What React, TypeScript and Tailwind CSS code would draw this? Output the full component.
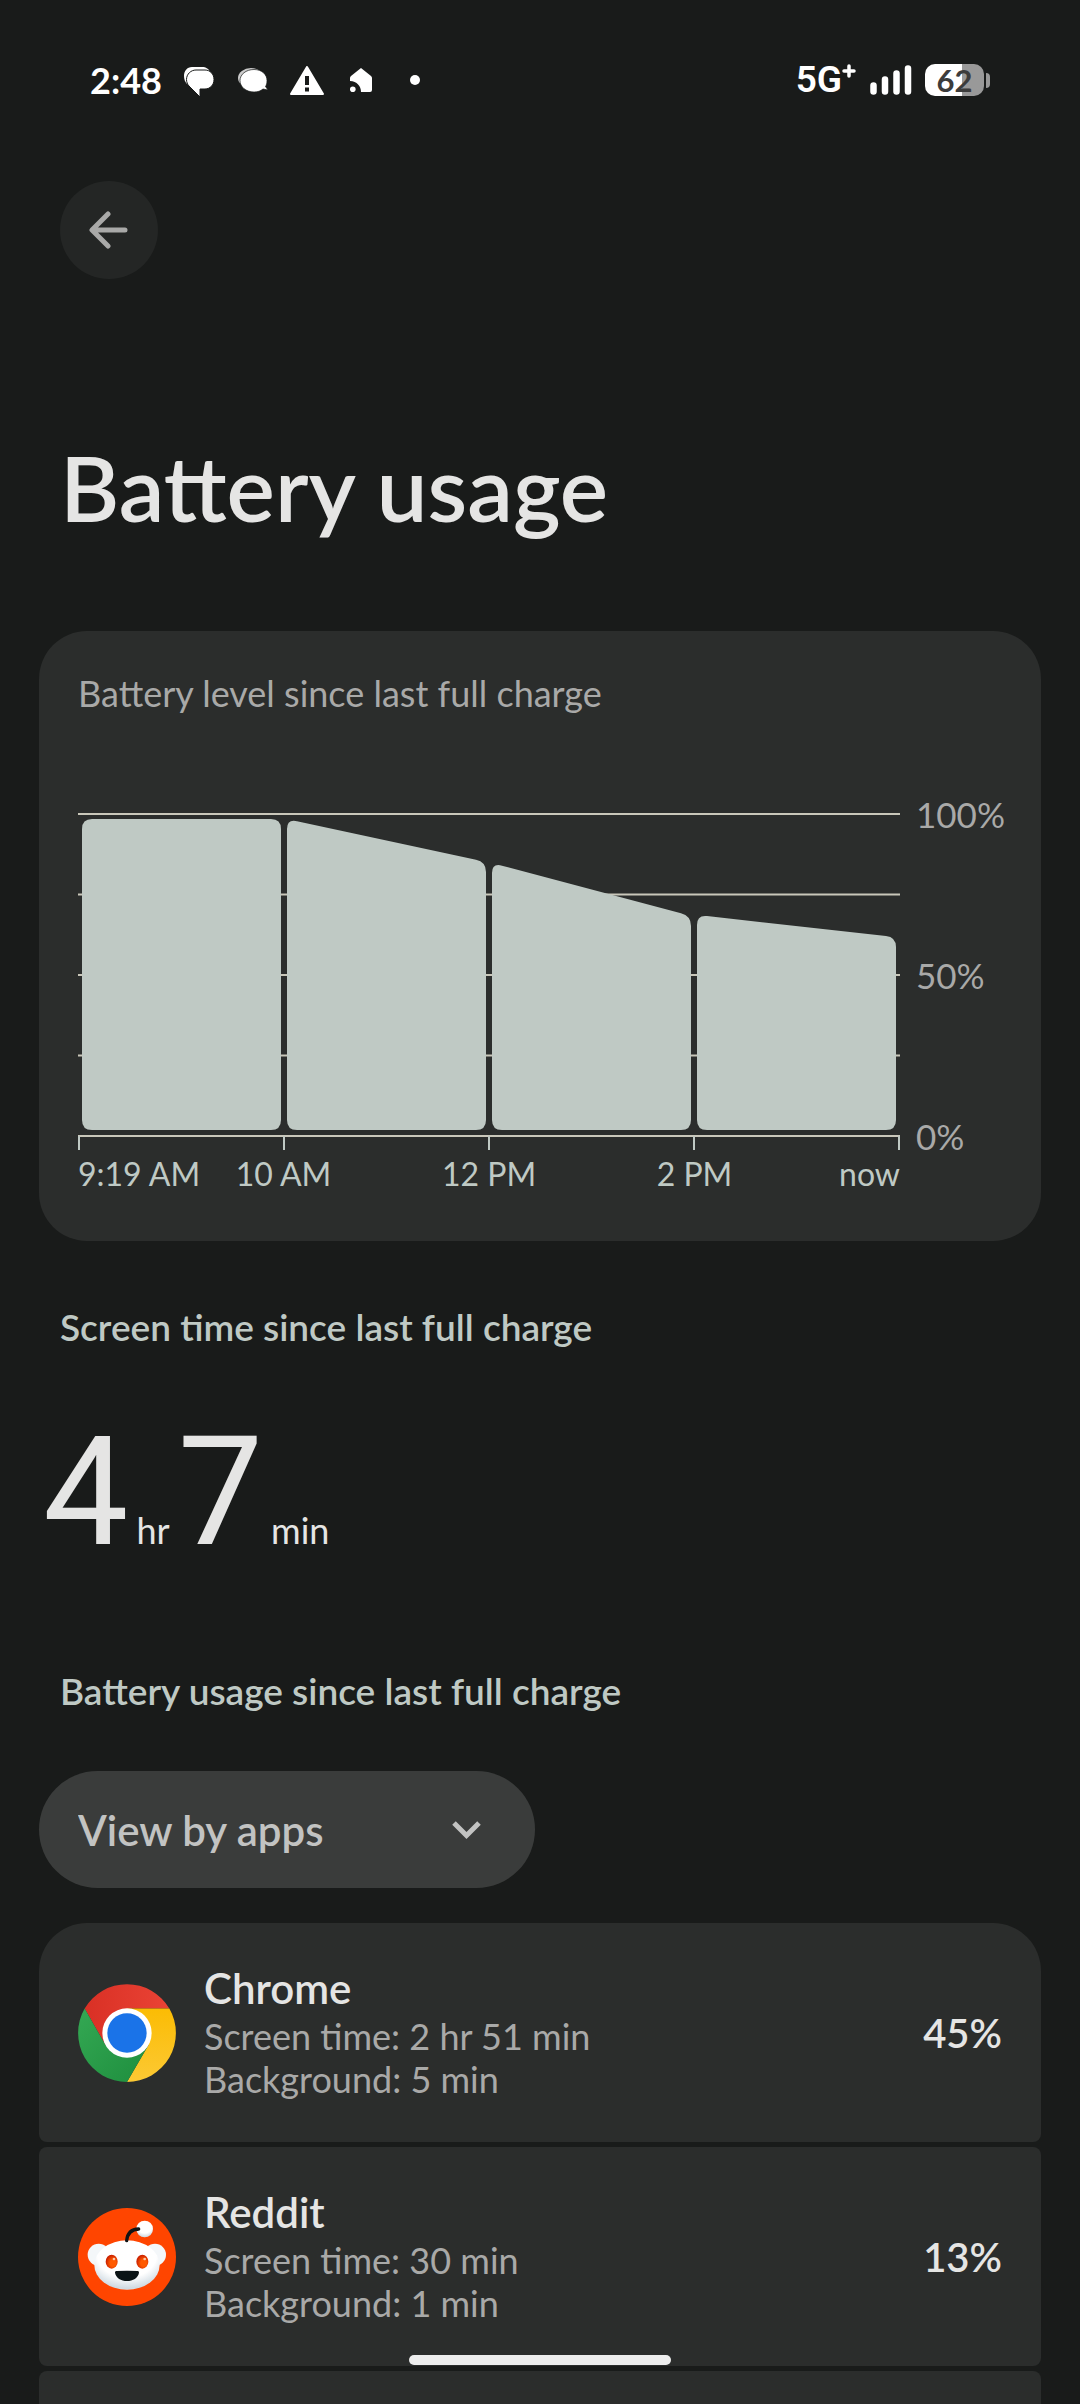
import { useState, type ReactNode } from 'react'

const periods = [
    { id: '9:19', start: 6, end: 6 },
    { id: '10', start: 6, end: 49 },
    { id: '12', start: 50, end: 103 },
    { id: '2', start: 102, end: 124 },
]

// One battery slice: flat bottom, sloped top, rounded corners
function slicePath(index: number, start: number, end: number) {
    const left = 4 + index * 205
    const right = left + 199
    const bottom = 317
    const r = 10
    const slope = (end - start) / 199
    return [
        `M${left} ${bottom - r}`,
        `V${start + r}`,
        `Q${left} ${start} ${left + r} ${start + slope * r}`,
        `L${right - r} ${end - slope * r}`,
        `Q${right} ${end} ${right} ${end + r}`,
        `V${bottom - r}`,
        `Q${right} ${bottom} ${right - r} ${bottom}`,
        `H${left + r}`,
        `Q${left} ${bottom} ${left} ${bottom - r}Z`,
    ].join(' ')
}

function StatusBar() {
    return (
        <div className="flex h-[160px] items-center justify-between px-[51px] text-white">
            <div className="flex items-center">
                <span className="w-[94px] text-[36px] leading-10 font-bold">2:48</span>
                <svg className="mt-1 h-[30px] w-[30px]" viewBox="0 0 30 30" aria-hidden="true">
                    <path d="M8 0H18C22 0 25 2 26 5H9C5 5 3 8 3 12V17C1 15 0 12 0 9C0 4 3 0 8 0Z" fill="#fff" />
                    <path d="M12 3H21C26 3 30 7 30 12.500C30 18 26 22 21 22H16V30L5 19C3.500 17.500 2.500 15 2.500 12.500C2.500 7 7 3 12 3Z" fill="#fff" stroke="#191b1a" strokeWidth="1" />
                </svg>
                <svg className="ml-6 h-[24px] w-[30px]" viewBox="0 0 30 24" aria-hidden="true">
                    <ellipse cx="13" cy="10" rx="13" ry="10" fill="#ccc" />
                    <path d="M16 1.500C24 1.500 29 6.500 29 12.500C29 15 28.500 17 27.500 18.500L30 22L25 21C22.500 23 20 24 16 24C8 24 2 19 2 12.500C2 6.500 8 1.500 16 1.500Z" fill="#fff" stroke="#191b1a" strokeWidth="0.700" />
                </svg>
                <svg className="ml-[22px] h-[29px] w-[34px]" viewBox="0 0 34 29" aria-hidden="true">
                    <path d="M17 1L33 28H1Z" fill="#fff" stroke="#fff" strokeWidth="2" strokeLinejoin="round" />
                    <path d="M15 10H19V19H15ZM15 21.500H19V25.500H15Z" fill="#191b1a" />
                </svg>
                <svg className="ml-[26px] h-[24px] w-[22px]" viewBox="0 0 22 24" aria-hidden="true">
                    <path d="M11 0L21 8Q22 9 22 10V22Q22 24 20 24H11C11 18 7 13.500 0 13V10Q0 9 1 8Z" fill="#fff" />
                    <circle cx="2.800" cy="21.200" r="2.800" fill="#fff" />
                </svg>
                <span className="ml-[38px] h-[10px] w-[10px] rounded-full bg-white" />
            </div>

            <div className="flex items-center">
                <span className="flex font-[Roboto,sans-serif] text-[37px] leading-10 font-semibold">
                    5G
                    <svg className="mt-1 h-[14px] w-[14px]" viewBox="0 0 14 14" aria-hidden="true">
                        <path d="M7 2V12M2 7H12" stroke="#fff" strokeWidth="3.500" strokeLinecap="round" />
                    </svg>
                </span>
                <svg className="ml-[14px] h-[30px] w-[42px]" viewBox="0 0 42 30" aria-hidden="true">
                    <path d="M3.500 20.500V26.500M15 14.500V26.500M26.500 8.500V26.500M38 3.500V26.500" stroke="#fff" strokeWidth="6.500" strokeLinecap="round" />
                </svg>
                <span className="ml-[13px] flex h-[32px] w-[59px] items-center justify-center rounded-[10px] bg-linear-to-r from-white from-62% to-[#999] to-62% text-[31px] leading-8 font-bold text-[#3c3c3c]">
                    62
                </span>
                <span className="ml-[2px] h-[15px] w-[4px] rounded-r-[4px] bg-[#999]" />
            </div>
        </div>
    )
}

function LevelChart() {
    return (
        <section className="rounded-[48px] bg-[#2b2d2c] px-[39px] pt-[42px] pb-[47px]">
            <h2 className="text-[36px] leading-10 text-[#a9a9a8]">Battery level since last full charge</h2>

            <div className="mt-[81px] flex gap-4">
                <div className="min-w-0 flex-1 pt-[19px]">
                    <svg className="w-full" viewBox="0 0 822 337" role="img" aria-label="Battery level from 9:19 AM to now">
                        <path d="M0 1H822M0 81.500H822M0 162H822M0 242.500H822M0 323H822" stroke="#c9c7ba" strokeWidth="2" />
                        <path d="M1 323V337M206 323V337M411 323V337M616 323V337M821 323V337" stroke="#bfc9c4" strokeWidth="2" />
                        {periods.map((period, i) => (
                            <path key={period.id} d={slicePath(i, period.start, period.end)} fill="#bfc9c4" />
                        ))}
                    </svg>
                    <div className="mt-1 grid grid-cols-8 text-center text-[32px] leading-10 whitespace-nowrap text-[#bfc9c4]">
                        <span className="text-left">9:19 AM</span>
                        <span className="col-span-2">10 AM</span>
                        <span className="col-span-2">12 PM</span>
                        <span className="col-span-2">2 PM</span>
                        <span className="flex justify-end">now</span>
                    </div>
                </div>
                <div className="flex h-[362px] w-[86px] flex-col justify-between text-[35px] leading-10 text-[#a9a9a8]">
                    <span>100%</span>
                    <span>50%</span>
                    <span>0%</span>
                </div>
            </div>
        </section>
    )
}

function ChromeIcon() {
    return (
        <svg className="size-[98px] shrink-0" viewBox="0 0 294 294" aria-hidden="true">
            <defs>
                <linearGradient id="chrome-red" x1="0" x2="1">
                    <stop offset="0" stopColor="#d93025" />
                    <stop offset="1" stopColor="#ea4335" />
                </linearGradient>
                <linearGradient id="chrome-yellow" x1="0" x2="0" y1="1" y2="0">
                    <stop offset="0" stopColor="#fcc934" />
                    <stop offset="1" stopColor="#fbbc04" />
                </linearGradient>
                <linearGradient id="chrome-green" x1="1" x2="0" y1="1" y2="0">
                    <stop offset="0" stopColor="#1e8e3e" />
                    <stop offset="1" stopColor="#34a853" />
                </linearGradient>
            </defs>
            <path d="M20 73.500A147 147 0 0 1 274 73.500H147L83 184Z" fill="url(#chrome-red)" />
            <path d="M274 73.500A147 147 0 0 1 147 294L211 184L147 73.500Z" fill="url(#chrome-yellow)" />
            <path d="M147 294A147 147 0 0 1 20 73.500L83 184L147 147L211 184Z" fill="url(#chrome-green)" />
            <circle cx="147" cy="147" r="74" fill="#fff" />
            <circle cx="147" cy="147" r="59" fill="#1a73e8" />
        </svg>
    )
}

function RedditIcon() {
    return (
        <svg className="size-[98px] shrink-0" viewBox="0 0 294 294" aria-hidden="true">
            <defs>
                <radialGradient id="snoo-head" cx="0.5" cy="0.3" r="0.75">
                    <stop offset="0.6" stopColor="#fff" />
                    <stop offset="0.9" stopColor="#cfdae2" />
                    <stop offset="1" stopColor="#f2f5f7" />
                </radialGradient>
                <radialGradient id="snoo-eye" cx="0.6" cy="0.6" r="0.6">
                    <stop offset="0.4" stopColor="#ff5a00" />
                    <stop offset="1" stopColor="#c81e00" />
                </radialGradient>
            </defs>
            <circle cx="147" cy="147" r="147" fill="#ff4500" />
            <circle cx="62" cy="140" r="33" fill="#f4f7f9" />
            <circle cx="231" cy="140" r="33" fill="#f4f7f9" />
            <circle cx="200" cy="63" r="25" fill="url(#snoo-head)" />
            <ellipse cx="147" cy="171" rx="98" ry="74" fill="url(#snoo-head)" />
            <path d="M146 98C148 76 160 64 182 63" fill="none" stroke="#101314" strokeWidth="10" strokeLinecap="round" />
            <ellipse cx="101" cy="161" rx="18" ry="21" fill="url(#snoo-eye)" />
            <ellipse cx="193" cy="161" rx="18" ry="21" fill="url(#snoo-eye)" />
            <circle cx="108" cy="153" r="4" fill="#ffc9a8" />
            <circle cx="200" cy="153" r="4" fill="#ffc9a8" />
            <path d="M115 189Q147 187 179 189Q184 189 183 194C180 210 165 219 147 219C129 219 114 210 111 194Q110 189 115 189Z" fill="#0b1416" />
        </svg>
    )
}

function AppRow({ icon, name, screenTime, background, percent }: { icon: ReactNode, name: string, screenTime: string, background: string, percent: string }) {
    return (
        <li className="overflow-hidden rounded-[8px] bg-[#2b2d2c] first:rounded-t-[48px]">
            <button type="button" className="flex min-h-[219px] w-full items-center gap-[28px] px-[39px] text-left">
                {icon}
                <span className="flex flex-1 flex-col text-[36px] leading-[43px] text-[#a9a9a8]">
                    <span className="mb-[3px] text-[42px] leading-[48px] font-semibold text-[#e5e5e4]">{name}</span>
                    <span>Screen time: {screenTime}</span>
                    <span>Background: {background}</span>
                </span>
                <span className="text-[40px] leading-[48px] font-semibold text-[#e5e5e4]">{percent}</span>
            </button>
        </li>
    )
}

export default function App() {
    const [view, setView] = useState('apps')

    return (
        <main className="flex min-h-screen flex-col bg-[#191b1a] px-[39px] font-[Lato,sans-serif] text-[#e5e5e4]">
            <StatusBar />

            <header className="mt-[21px] px-[21px]">
                <button type="button" aria-label="Back" className="flex size-[98px] items-center justify-center rounded-full bg-[#242625]">
                    <svg className="h-[38px] w-[40px]" viewBox="0 0 40 38" fill="none" stroke="#a9a9a8" strokeWidth="5" strokeLinecap="round" strokeLinejoin="round" aria-hidden="true">
                        <path d="M19 3L3 19L19 35M4 19H36" />
                    </svg>
                </button>
                <h1 className="mt-[160px] mb-[96px] text-[91px] leading-[96px] font-semibold">Battery usage</h1>
            </header>

            <LevelChart />

            <h2 className="mt-[66px] px-[21px] text-[37px] leading-10 font-semibold text-[#bfc9c4]">Screen time since last full charge</h2>
            <p className="mt-[65px] flex items-baseline gap-2 pl-1 text-[36px] leading-10">
                <span className="font-[Roboto,sans-serif] text-[152px] leading-[160px]">4</span>
                hr
                <span className="font-[Roboto,sans-serif] text-[152px] leading-[160px]">7</span>
                min
            </p>

            <h2 className="mt-[99px] px-[21px] text-[37px] leading-10 font-semibold text-[#bfc9c4]">Battery usage since last full charge</h2>
            <div className="relative mt-[60px] w-[496px] max-w-full">
                <select
                    aria-label="View battery usage"
                    value={view}
                    onChange={(e) => setView(e.target.value)}
                    className="h-[117px] w-full appearance-none rounded-full bg-[#3a3c3b] px-[39px] text-[42px] leading-[48px] font-semibold text-[#c2c3c2]"
                >
                    <option value="apps">View by apps</option>
                    <option value="systems">View by systems</option>
                </select>
                <svg className="pointer-events-none absolute top-[49px] right-[53px] h-[20px] w-[31px]" viewBox="0 0 31 20" fill="none" stroke="#c2c3c2" strokeWidth="5" aria-hidden="true">
                    <path d="M3 3L15.500 15.500L28 3" />
                </svg>
            </div>

            <ul className="mt-[35px] flex flex-1 flex-col gap-[5px]">
                <AppRow icon={<ChromeIcon />} name="Chrome" screenTime="2 hr 51 min" background="5 min" percent="45%" />
                <AppRow icon={<RedditIcon />} name="Reddit" screenTime="30 min" background="1 min" percent="13%" />
                <li aria-hidden="true" className="min-h-8 flex-1 rounded-t-[8px] bg-[#2b2d2c]" />
            </ul>

            <div className="fixed bottom-[39px] left-1/2 h-[10px] w-[262px] -translate-x-1/2 rounded-full bg-[#ededed]" />
        </main>
    )
}
